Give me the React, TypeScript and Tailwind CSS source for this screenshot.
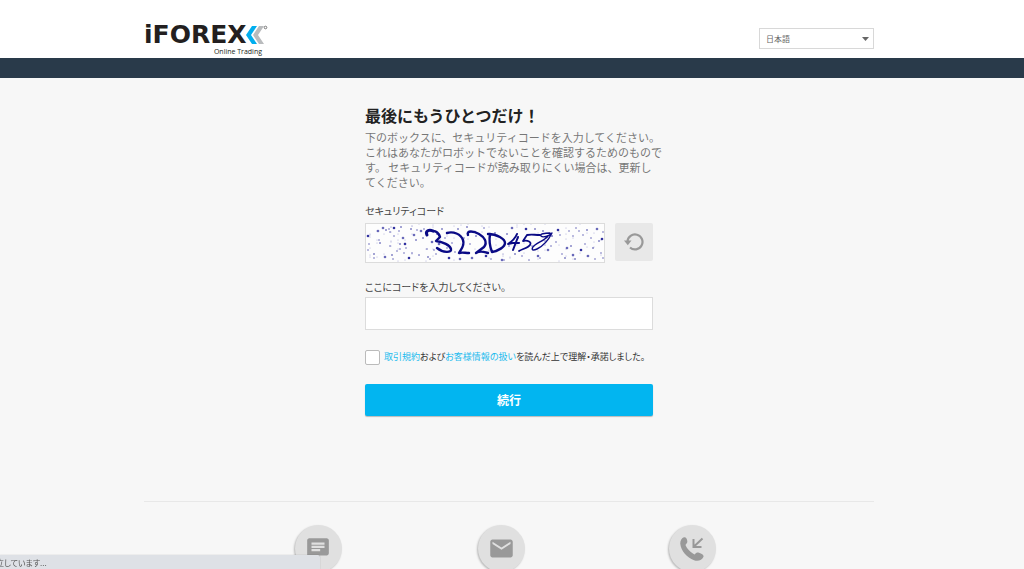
import { useState } from 'react'
import type { ReactNode } from 'react'
import { MdChat, MdEmail } from 'react-icons/md'

const LANGUAGES = ['日本語', 'English']

// x, y pairs of the captcha noise
const DOTS: [number, number][] = [
  [2, 12], [3, 20], [2, 26], [8, 30], [12, 7], [13, 16], [14, 19], [8, 34], [17, 4], [20, 6],
  [23, 5], [24, 8], [28, 4], [28, 12], [33, 7], [35, 3], [37, 14], [24, 22], [26, 31], [27, 35],
  [19, 33], [34, 20], [34, 25], [38, 29], [39, 20], [40, 24], [31, 27], [45, 5], [48, 11], [51, 6],
  [50, 16], [53, 31], [55, 7], [57, 14], [58, 5], [46, 29], [43, 34], [61, 25], [64, 35], [62, 33],
  [66, 18], [68, 26], [71, 10], [70, 30], [73, 20], [76, 5], [79, 14], [81, 24], [83, 34], [86, 19],
  [89, 28], [92, 5], [94, 35], [98, 14], [101, 3], [104, 20], [106, 34], [110, 12], [113, 28], [118, 4],
  [120, 32], [119, 16], [125, 35], [129, 9], [136, 36], [138, 36], [141, 10], [143, 22], [146, 4], [149, 30],
  [152, 14], [156, 32], [160, 5], [163, 36], [166, 22], [169, 5], [172, 32], [174, 34], [177, 7], [179, 17],
  [182, 26], [186, 12], [185, 22], [190, 18], [192, 6], [194, 11], [196, 30], [199, 34], [201, 24], [203, 7],
  [205, 22], [207, 12], [207, 31], [209, 35], [210, 4], [213, 7], [215, 26], [217, 11], [219, 20], [221, 6],
  [222, 32], [225, 14], [227, 24], [229, 35], [231, 5], [233, 17], [235, 29], [237, 8], [236, 15], [237, 34],
]

function Logo() {
  return (
    <a href="#" className="relative mt-0.5 block w-[122px] text-[#231f20]">
      <span className="block font-['DejaVu_Sans',sans-serif] text-[25px] leading-6 font-bold">iFOREX</span>
      <svg className="absolute top-0.5 left-[100px] h-5 w-6" viewBox="0 0 24 20" aria-hidden="true">
        <path d="M0 10 7 1h4L5 10l6 9H7z" fill="#fff" />
        <path d="M2 10 8 1h5l-6 9 6 9H8z" fill="#00aeef" />
        <path d="M9 10l6-9h5l-6 9 6 9h-5z" fill="#b9bbbd" />
        <circle cx="21.500" cy="2.500" r="1.300" fill="none" stroke="#777" />
      </svg>
      <span className="mt-px block pr-1 text-right font-['Open_Sans',sans-serif] text-[7px] leading-2">
        Online Trading
      </span>
    </a>
  )
}

function Captcha() {
  return (
    <svg
      className="h-10 min-w-0 flex-1 border border-[#dcdcdc] bg-[#fdfdfd]"
      viewBox="0 0 238 38"
      preserveAspectRatio="none"
      role="img"
      aria-label="セキュリティコード"
    >
      {DOTS.map(([x, y], i) => (
        <g key={i} fill="#1c1c96">
          <circle cx={x} cy={y} r={i % 4 === 0 ? 1.3 : 0.8} opacity={i % 3 === 0 ? 0.9 : 0.65} />
          <circle cx={(x * 7 + 11) % 238} cy={(y * 5 + i) % 38} r="0.500" opacity="0.400" />
        </g>
      ))}
      <g fill="none" stroke="#0a0a85" strokeWidth="2.400" strokeLinecap="round" strokeLinejoin="round">
        <path strokeWidth="3" d="M61 11c-2-4 2-6 6-4" />
        <path d="M67 7c4 0 6 3 7 6l-4 4c7 1 14 4 15 8s-8 4-14-1" />
        <path d="M81 9c6-2 14 1 16 7s-2 9-4 13c3-1 6 0 10 0" />
        <path d="M102 11c-2-5 6-4 11-1s9 8 5 13l-8 6c5-3 8-1 12 0" />
        <path d="M124 10c-1 6 0 13 2 18 6-1 13-5 13-9s-8-9-17-9" />
        <path strokeWidth="2" d="M151 10c-2 5-6 8-9 10 4-1 8-2 11-1m-1-6-5 13" />
        <path strokeWidth="1.800" d="M174 11c-6 0-8-1-13 0l-4 6c5-1 9 1 7 4s-8 4-11 6" />
        <path strokeWidth="1.400" d="M184 9c-5 0-11 1-9 3s8 0 11-3c-3 6-9 13-15 16s-6-1-2-4 10-5 13-9" />
      </g>
    </svg>
  )
}

function CallbackIcon() {
  return (
    <svg className="size-6" viewBox="0 0 24 24" aria-hidden="true">
      <path
        d="M4 .3c1.600-.5 3 1.200 3.300 3.700.3 2-1.300 3-1.800 4C7 12 11 15.800 14.700 17.500c1.500-2 2.800-2.200 4.300-1.700 3 1 5 2.500 4.500 4-1.500 3.500-5.500 4.700-9.500 3.400C7 20.500 1 14 .3 7 0 4 1.500 1 4 .3z"
        fill="currentColor"
      />
      <path d="M22.500 1.500 14 9.500M13.500 2v8H21.500" fill="none" stroke="currentColor" strokeWidth="2" />
    </svg>
  )
}

function ContactLink({ label, children }: { label: string; children: ReactNode }) {
  return (
    <a
      href="#"
      aria-label={label}
      className="flex size-[47px] items-center justify-center rounded-full bg-[#e0e0e0] text-[#999] shadow-[-1px_1px_2px_rgba(0,0,0,0.25)]"
    >
      {children}
    </a>
  )
}

export default function App() {
  const [language, setLanguage] = useState(LANGUAGES[0])
  const [code, setCode] = useState('')
  const [accepted, setAccepted] = useState(false)

  return (
    <div className="h-screen overflow-hidden bg-[#f7f7f7] font-['Noto_Sans_CJK_JP',sans-serif] text-[#333]">
      {/* Header */}
      <header className="border-b-[20px] border-[#293a4a] bg-white pr-1.5">
        <div className="mx-auto flex h-[58px] max-w-[730px] items-start justify-between pt-[21px]">
          <Logo />
          <div className="relative mt-[7px] w-[115px]">
            <select
              value={language}
              onChange={(e) => setLanguage(e.target.value)}
              aria-label="言語"
              className="block h-[21px] w-full appearance-none border border-[#d8d8d8] bg-white pl-1.5 text-[8px] leading-4 text-[#666]"
            >
              {LANGUAGES.map((l) => (
                <option key={l}>{l}</option>
              ))}
            </select>
            <svg className="pointer-events-none absolute top-[9px] right-[5px] h-1 w-[7px]" viewBox="0 0 7 4" aria-hidden="true">
              <path d="M0 0h7L3.500 4z" fill="#666" />
            </svg>
          </div>
        </div>
      </header>

      <main className="pr-1.5">
        <form className="mx-auto max-w-[288px] pt-[25px] whitespace-nowrap" onSubmit={(e) => e.preventDefault()}>
          <h1 className="text-base leading-6 font-bold text-[#222]">最後にもうひとつだけ！</h1>
          <p className="mt-[3px] text-[11px] leading-[15px] text-[#777]">
            下のボックスに、セキュリティコードを入力してください。
            <br />
            これはあなたがロボットでないことを確認するためのもので
            <br />
            す。 セキュリティコードが読み取りにくい場合は、更新し
            <br />
            てください。
          </p>

          <p className="mt-[13px] text-[10px] leading-4 text-[#444] [font-feature-settings:'palt']">セキュリティコード</p>
          <div className="mt-1 flex gap-2.5">
            <Captcha />
            <button type="button" aria-label="更新" className="flex h-[38px] w-[38px] items-center justify-center rounded-xs bg-[#e8e8e8]">
              <svg className="size-5" viewBox="0 0 20 20" aria-hidden="true">
                <path d="M3.500 9.500a7.500 7.500 0 1 1 2.500 6" fill="none" stroke="#999" strokeWidth="2.200" />
                <path d="M0 8.500h7.500l-3.700 4.700z" fill="#999" />
              </svg>
            </button>
          </div>

          <label htmlFor="code" className="mt-4 block text-[10px] leading-4 text-[#444] [font-feature-settings:'palt']">
            ここにコードを入力してください。
          </label>
          <input
            id="code"
            type="text"
            value={code}
            onChange={(e) => setCode(e.target.value)}
            className="mt-0.5 block h-[33px] w-full border border-[#dcdcdc] bg-white px-2 text-xs"
          />

          <div className="mt-[19px] flex items-center gap-1">
            <input
              id="terms"
              type="checkbox"
              checked={accepted}
              onChange={(e) => setAccepted(e.target.checked)}
              className="size-[15px] appearance-none rounded-xs border border-[#bbb] bg-white checked:bg-[#00b5f0]"
            />
            <label htmlFor="terms" className="text-[9px] leading-4 [font-feature-settings:'palt']">
              <a href="#" className="text-[#1cbbee]">取引規約</a>および<a href="#" className="text-[#1cbbee]">お客様情報の扱い</a>を読んだ上で理解・承諾しました。
            </label>
          </div>

          <button
            type="submit"
            className="mt-[19px] block h-8 w-full rounded-xs bg-[#02b5f0] text-xs font-bold text-white shadow-[0_1px_1px_rgba(0,0,0,0.25)]"
          >
            続行
          </button>
        </form>

        {/* Contact */}
        <footer className="mx-auto mt-[85px] grid max-w-[730px] grid-cols-[183px_191px_47px] justify-center border-t border-[#e8e8e8] pt-[23px] pr-2">
          <ContactLink label="チャット">
            <MdChat className="size-[26px]" />
          </ContactLink>
          <ContactLink label="メール">
            <MdEmail className="size-[27px]" />
          </ContactLink>
          <ContactLink label="電話">
            <CallbackIcon />
          </ContactLink>
        </footer>
      </main>

      {/* Browser status bubble */}
      <div className="fixed bottom-0 left-0 h-3.5 w-80 overflow-hidden rounded-tr-xs bg-[#dee1e6] text-[8px] leading-4 text-[#555] shadow-[0_0_1px_rgba(0,0,0,0.4)]">
        <span className="-ml-1 [font-feature-settings:'palt']">立しています...</span>
      </div>
    </div>
  )
}
